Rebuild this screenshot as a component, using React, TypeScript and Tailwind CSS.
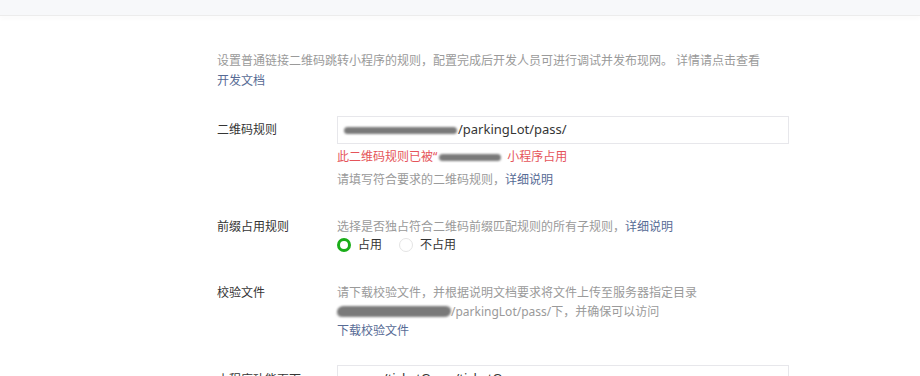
import type { ReactNode } from 'react';

// Blurred-out segment of text (the reference has these redactions)
function Smudge({ w, h = 7, className = '' }: { w: number; h?: number; className?: string }) {
  return (
    <span
      className={`inline-block align-middle rounded-full bg-[#7a7a7a] blur-[0.8px] ${className}`}
      style={{ width: w, height: h }}
    />
  );
}

function Row({ label, children, className = '', labelClass = '' }: { label: string; children: ReactNode; className?: string; labelClass?: string }) {
  return (
    <div className={`flex ${className}`}>
      <div className={`w-[120px] shrink-0 text-[#353535] ${labelClass}`}>{label}</div>
      <div className="flex-1 min-w-0">{children}</div>
    </div>
  );
}

function Radio({ checked, label }: { checked?: boolean; label: string }) {
  return (
    <label className="flex items-center gap-[7px] text-[#353535]">
      <span
        className={
          checked
            ? 'w-[14px] h-[14px] rounded-full border-[3px] border-[#1aad19] bg-white'
            : 'w-[14px] h-[14px] rounded-full border border-[#e4e4e4] bg-white'
        }
      />
      {label}
    </label>
  );
}

export default function App() {
  return (
    <div
      className="w-[920px] h-[376px] overflow-hidden bg-white text-[12px]"
      style={{ fontFamily: '"Noto Sans", "Noto Sans CJK SC", sans-serif' }}
    >
      {/* ── Top bar ─────────────────────────────── */}
      <div className="h-4 bg-[#f7f8fa] border-b border-[#ececec] shadow-[0_4px_4px_rgba(0,0,0,0.015)]" />

      <div className="pl-[217px] pr-[131px]">
        {/* Intro */}
        <div className="pt-[35px] leading-[20px] text-[#9a9a9a]">
          <div className="whitespace-nowrap">
            设置普通链接二维码跳转小程序的规则，配置完成后开发人员可进行调试并发布现网。 详情请点击查看
          </div>
          <a className="text-[#576b95]">开发文档</a>
        </div>

        {/* 二维码规则 */}
        <Row label="二维码规则" className="mt-[25px]" labelClass="leading-[28px]">
          <div className="h-[28px] border border-[#e7e7eb] flex items-center pl-[6px] text-[13px] text-[#353535] w-[452px]">
            <Smudge w={113} className="mr-[1px]" />
            <span>/parkingLot/pass/</span>
          </div>
          <div className="mt-[3px] leading-[20px] text-[#e5545a] flex items-center">
            此二维码规则已被“
            <Smudge w={62} h={7} className="ml-[2px] mr-[6px]" />
            小程序占用
          </div>
          <div className="mt-[3px] leading-[20px] text-[#9a9a9a]">
            请填写符合要求的二维码规则，<a className="text-[#576b95]">详细说明</a>
          </div>
        </Row>

        {/* 前缀占用规则 */}
        <Row label="前缀占用规则" className="mt-[27px]" labelClass="leading-[20px]">
          <div className="leading-[20px] text-[#9a9a9a]">
            选择是否独占符合二维码前缀匹配规则的所有子规则，<a className="text-[#576b95]">详细说明</a>
          </div>
          <div className="h-[16px] flex items-center gap-[17px]">
            <Radio checked label="占用" />
            <Radio label="不占用" />
          </div>
        </Row>

        {/* 校验文件 */}
        <Row label="校验文件" className="mt-[30px]" labelClass="leading-[20px]">
          <div className="leading-[19px] text-[#9a9a9a]">
            <div>请下载校验文件，并根据说明文档要求将文件上传至服务器指定目录</div>
            <div className="flex items-center">
              <Smudge w={114} h={11} className="rounded-[6px] -skew-x-6" />
              <span>/parkingLot/pass/下，并确保可以访问</span>
            </div>
            <a className="block text-[#576b95]">下载校验文件</a>
          </div>
        </Row>

        {/* 小程序功能页面 */}
        <Row label="小程序功能页面" className="mt-[25px]" labelClass="leading-[30px]">
          <div className="h-[28px] border border-[#e7e7eb] flex items-center pl-[8px] text-[13px] text-[#353535] w-[452px]">
            pages/ticketOpen/ticketOpen
          </div>
        </Row>
      </div>
    </div>
  );
}
